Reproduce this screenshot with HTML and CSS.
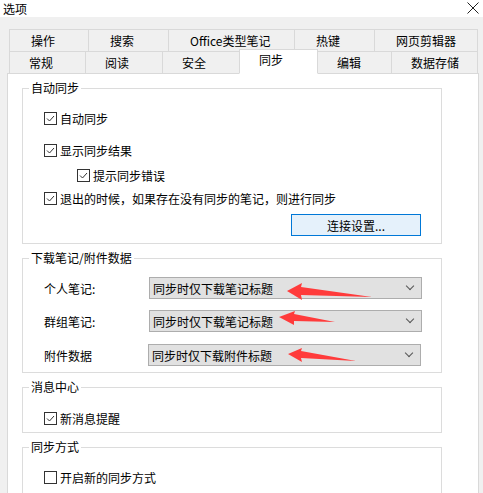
FILE: index.html
```html
<!DOCTYPE html>
<html>
<head>
  <meta charset="utf-8">
  <link rel="stylesheet" href="styles.css">
</head>
<body>
  <div class="titlebar">
    <span class="title">选项</span>
    <svg class="close" width="12" height="12" viewBox="0 0 12 12">
      <path d="M0.5 0.5 L11.5 11.5 M11.5 0.5 L0.5 11.5" stroke="#222" stroke-width="1" fill="none"/>
    </svg>
  </div>

  <div class="dialog">
    <div class="tabs">
      <div class="tab-row row1">
        <div class="tab w80">操作</div>
        <div class="tab w81">搜索</div>
        <div class="tab w127">Office类型笔记</div>
        <div class="tab w81">热键</div>
        <div class="tab grow">网页剪辑器</div>
      </div>
      <div class="tab-row row2">
        <div class="tab w77">常规</div>
        <div class="tab w78">阅读</div>
        <div class="tab w78">安全</div>
        <div class="tab w79 active">同步</div>
        <div class="tab w75">编辑</div>
        <div class="tab grow">数据存储</div>
      </div>
    </div>

    <div class="panel">
      <fieldset class="group g1">
        <legend>自动同步</legend>
        <div class="row r1"><span class="check on"></span>自动同步</div>
        <div class="row r2"><span class="check on"></span>显示同步结果</div>
        <div class="row r3 sub"><span class="check on"></span>提示同步错误</div>
        <div class="row r4"><span class="check on"></span>退出的时候，如果存在没有同步的笔记，则进行同步</div>
        <div class="btn-line"><button class="btn">连接设置...</button></div>
      </fieldset>

      <fieldset class="group g2">
        <legend>下载笔记/附件数据</legend>
        <div class="field f1">
          <span class="label">个人笔记:</span>
          <div class="combo"><span>同步时仅下载笔记标题</span><i class="chev"></i></div>
        </div>
        <div class="field f2">
          <span class="label">群组笔记:</span>
          <div class="combo"><span>同步时仅下载笔记标题</span><i class="chev"></i></div>
        </div>
        <div class="field f3">
          <span class="label">附件数据</span>
          <div class="combo"><span>同步时仅下载附件标题</span><i class="chev"></i></div>
        </div>
      </fieldset>

      <fieldset class="group g3">
        <legend>消息中心</legend>
        <div class="row"><span class="check on"></span>新消息提醒</div>
      </fieldset>

      <fieldset class="group g4">
        <legend>同步方式</legend>
        <div class="row"><span class="check"></span>开启新的同步方式</div>
      </fieldset>
    </div>
  </div>

  <svg class="marks" width="483" height="493" viewBox="0 0 483 493">
    <polygon points="287,291 302,283 301,287 372,297 301,295 302,300" fill="#ff3b3b"/>
    <polygon points="279,317 295,311 294,314 335,322 294,321 294,325" fill="#ff3b3b"/>
    <polygon points="288,354 302,348 301,351 356,361 301,358 302,362" fill="#ff3b3b"/>
  </svg>
</body>
</html>
```

FILE: styles.css
```css
* {
  box-sizing: border-box;
}

body {
  margin: 0;
  width: 483px;
  height: 493px;
  overflow: hidden;
  position: relative;
  background: #f0f0f0;
  font-family: "Noto Sans CJK SC", "Liberation Sans", sans-serif;
  font-size: 12px;
  color: #000;
}

.titlebar {
  height: 17px;
  background: #fff;
  display: flex;
  align-items: flex-start;
  justify-content: space-between;
}

.title {
  padding-left: 3px;
  line-height: 17px;
}

.close {
  margin: 2px 4px 0 0;
}

.dialog {
  padding-top: 12px;
}

.tabs {
  padding-left: 9px;
  width: 478px;
}

.tab-row {
  display: flex;
}

.tab {
  height: 23px;
  line-height: 21px;
  border: 1px solid #d9d9d9;
  background: #f0f0f0;
  white-space: nowrap;
}

.tab + .tab {
  margin-left: -1px;
}

.row1 .tab {
  padding-left: 21px;
}

.row2 {
  margin-top: -1px;
}

.row2 .tab {
  padding-left: 19px;
}

.tab.active {
  position: relative;
  z-index: 1;
  height: 25px;
  margin-top: -2px;
  line-height: 19px;
  background: #fff;
  border-bottom-color: #fff;
}

.w75 { width: 75px; }
.w77 { width: 77px; }
.w78 { width: 78px; }
.w79 { width: 79px; }
.w80 { width: 80px; }
.w81 { width: 81px; }
.w127 { width: 127px; }
.grow { flex: 1; }

.panel {
  margin: -1px 0 0 7px;
  width: 472px;
  height: 430px;
  background: #fff;
  border: 1px solid #d9d9d9;
  padding: 7px 36px 0 14px;
}

.group {
  margin: 0;
  width: 420px;
  border: 1px solid #dcdcdc;
  padding: 0 0 0 21px;
}

.group + .group {
  margin-top: 7px;
}

.group legend {
  margin-left: -15px;
  padding: 0 2px;
  line-height: 14px;
}

.row {
  display: flex;
  align-items: center;
  height: 16px;
  white-space: nowrap;
}

.check {
  width: 13px;
  height: 13px;
  border: 1px solid #333;
  margin-right: 3px;
  background: #fff;
  flex: none;
}

.check.on {
  background: #fff url("data:image/svg+xml;utf8,<svg xmlns='http://www.w3.org/2000/svg' width='11' height='11'><path d='M2 5.5 L4.5 8 L9 3' stroke='%23333' stroke-width='1' fill='none'/></svg>") no-repeat center;
}

.sub {
  padding-left: 33px;
}

.g1 .r1 { margin-top: 15px; }
.g1 .r2 { margin-top: 16px; }
.g1 .r3 { margin-top: 9px; }
.g1 .r4 { margin-top: 7px; }

.g1 {
  padding-bottom: 7px;
}

.btn-line {
  display: flex;
  justify-content: flex-end;
  margin-top: 8px;
  padding-right: 20px;
}

.btn {
  width: 130px;
  height: 22px;
  border: 1px solid #0078d7;
  background: #e5f1fb;
  font: inherit;
  color: #000;
  padding: 0;
}

.g2 {
  padding-bottom: 6px;
}

.field {
  display: flex;
  align-items: center;
  height: 22px;
}

.f1 { margin-top: 12px; }
.f2 { margin-top: 11px; }
.f3 { margin-top: 12px; }

.label {
  width: 105px;
}

.combo {
  width: 273px;
  height: 22px;
  background: #e1e1e1;
  border: 1px solid #adadad;
  display: flex;
  align-items: center;
  justify-content: space-between;
  padding: 0 8px 0 3px;
}

.f3 .label {
  width: 104px;
}

.chev {
  width: 6px;
  height: 6px;
  border-right: 1px solid #555;
  border-bottom: 1px solid #555;
  transform: rotate(45deg);
  margin-top: -4px;
}

.g3 {
  padding-bottom: 6px;
}

.g3 .row {
  margin-top: 16px;
}

.g4 {
  height: 60px;
}

.g4 .row {
  margin-top: 15px;
}

.marks {
  position: absolute;
  top: 0;
  left: 0;
  pointer-events: none;
}
```
